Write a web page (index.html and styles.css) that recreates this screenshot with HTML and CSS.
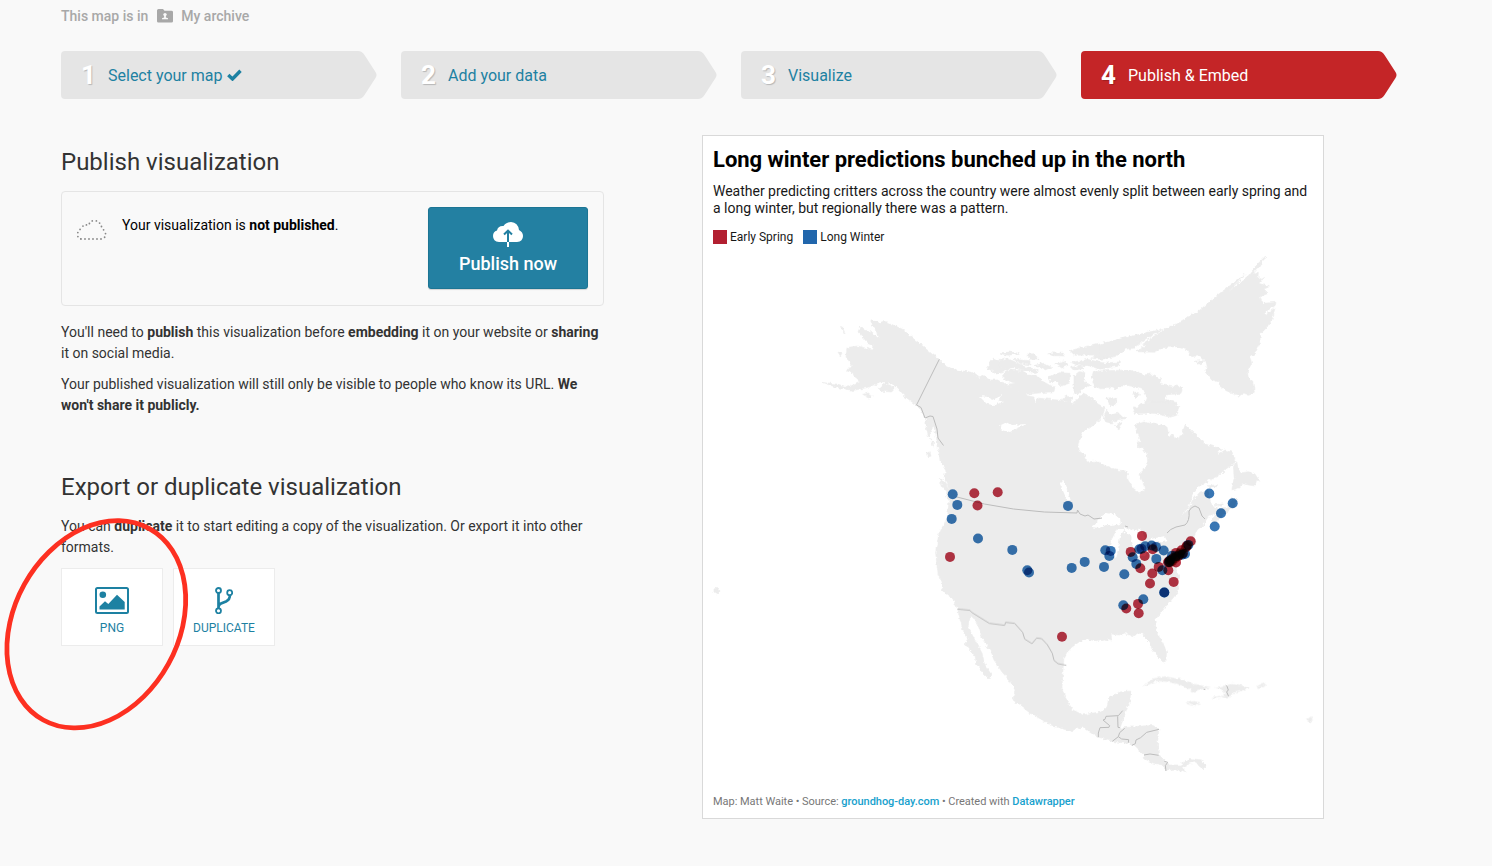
FILE: index.html
```
<!DOCTYPE html>
<html lang="en">
<head>
<meta charset="utf-8">
<title>Publish &amp; Embed</title>
<link rel="stylesheet" href="styles.css">
</head>
<body>
<svg class="defs" width="0" height="0"><defs>
  <path id="arrow" d="M4 0H297Q301 0 303.500 4L314.500 21Q316.500 24 314.500 27L303.500 44Q301 48 297 48H4Q0 48 0 44V4Q0 0 4 0Z"/>
</defs></svg>
<div class="page">
  <div class="crumb"><span>This map is in</span>
    <svg width="16" height="14" viewBox="0 0 16 14"><path fill="#a8a8a8" d="M1.500 0H6L7.500 1.800H14.500Q16 1.800 16 3.200V12.300Q16 13.600 14.600 13.600H1.400Q0 13.600 0 12.300V1.500Q0 0 1.500 0Z"/><circle cx="8" cy="5.600" r="1.700" fill="#f9f9f9"/><path fill="#f9f9f9" d="M7.100 6H8.900V8.500L11 9.300V10.300H5V9.300L7.100 8.500Z"/></svg>
    <span>My archive</span></div>
  <nav class="steps">
    <a class="step"><svg class="step-bg" viewBox="0 0 316 48"><use href="#arrow"/></svg><b>1</b><span>Select your map</span><svg class="check" width="15" height="12" viewBox="0 0 15 12"><path d="M1.300 6L5.500 10L13.500 1.800" fill="none" stroke="#1d81a2" stroke-width="3.400"/></svg></a>
    <a class="step"><svg class="step-bg" viewBox="0 0 316 48"><use href="#arrow"/></svg><b>2</b><span>Add your data</span></a>
    <a class="step"><svg class="step-bg" viewBox="0 0 316 48"><use href="#arrow"/></svg><b>3</b><span>Visualize</span></a>
    <a class="step active"><svg class="step-bg" viewBox="0 0 316 48"><use href="#arrow"/></svg><b>4</b><span>Publish &amp; Embed</span></a>
  </nav>
  <main class="columns">
    <section class="left">
      <h2>Publish visualization</h2>
      <div class="publish-box">
        <svg class="cloud" width="32" height="22" viewBox="0 0 32 22"><path d="M5 20H26Q30.500 18 29.500 14.500Q28.500 11 26 9.500Q24.500 2 18 1.500Q14 2 12.500 6.500Q8 4.500 5.500 9Q1 13 1.500 16Q2 19.500 5 20Z" fill="none" stroke="#888" stroke-width="1.800" stroke-linecap="round" stroke-dasharray="0 4"/></svg>
        <p>Your visualization is <b>not published</b>.</p>
        <button class="publish"><svg width="30" height="26" viewBox="0 0 30 26"><path fill="#fff" d="M6 20Q0 19.500 0 14Q0 9.500 4 8.500Q5 3.500 10.500 4Q13.500 0 18 0Q25 .5 26 8Q30 10 30 14Q30 19.500 24 20Z"/><path d="M15 9V20M11 12.500L15 8.700L19 12.500" fill="none" stroke="#2380a2" stroke-width="2"/><path d="M15 20V25" stroke="#fff" stroke-width="2"/></svg><span>Publish now</span></button>
      </div>
      <p class="copy">You'll need to <b>publish</b> this visualization before <b>embedding</b> it on your website or <b>sharing</b><br>it on social media.</p>
      <p class="copy">Your published visualization will still only be visible to people who know its URL. <b>We<br>won't share it publicly.</b></p>
      <h2 class="export">Export or duplicate visualization</h2>
      <p class="copy">You can <b>duplicate</b> it to start editing a copy of the visualization. Or export it into other<br>formats.</p>
      <div class="tiles">
        <a class="tile"><svg width="34" height="27" viewBox="0 0 34 27"><rect x="1" y="1" width="32" height="25" rx="1.500" fill="none" stroke="#1d81a2" stroke-width="2"/><circle cx="7.800" cy="7.800" r="3.300" fill="#1d81a2"/><path fill="#1d81a2" d="M4.500 22.500V19.500L10 14.300L13.300 17L22 7.800L29.700 15V22.500Z"/></svg><span>PNG</span></a>
        <a class="tile"><svg width="18" height="27" viewBox="0 0 18 27"><g fill="none" stroke="#1d81a2"><path stroke-width="2.700" d="M3.500 5V22M14.900 8Q15 12.500 11 14.500L6 16.500Q3.700 17.500 3.500 20"/><g stroke-width="1.800"><circle cx="3.500" cy="3.500" r="2.500" fill="#fff"/><circle cx="14.700" cy="5.700" r="2.500" fill="#fff"/><circle cx="3.500" cy="23.800" r="2.500" fill="#fff"/></g></g></svg><span>DUPLICATE</span></a>
      </div>
    </section>
    <section class="card">
      <h1>Long winter predictions bunched up in the north</h1>
      <p class="intro">Weather predicting critters across the country were almost evenly split between early spring and<br>a long winter, but regionally there was a pattern.</p>
      <div class="legend"><i class="red"></i><span>Early Spring</span><i class="blue"></i><span>Long Winter</span></div>
      <svg class="map" viewBox="703 250 620 540">
        <defs><filter id="coast" filterUnits="userSpaceOnUse" x="703" y="250" width="620" height="540" color-interpolation-filters="sRGB"><feTurbulence type="fractalNoise" baseFrequency=".28" numOctaves="2" seed="4"/><feDisplacementMap in="SourceGraphic" scale="4.500" xChannelSelector="R" yChannelSelector="G"/></filter></defs>
        <g filter="url(#coast)">
        <g class="land">
          <path d="M871 318.700L874 320 878 323 883 321.500 887 322 893 325 900 328 904 330 910 336 918 342 925 348 932 354 939 359 946 366 953 369 961 371 968 371.500 976 374 979 378 983 376 990 380 998 380 1004 384 1016 390 1028 396 1034 397 1035 403 1038 398 1046 399 1058 400 1065 402 1070 400 1073 404 1078 398 1083 394 1092 398 1098 404 1105 408 1103 414 1100 420 1094 424 1090 427 1083 432 1079 440 1078 446 1080 451.700 1085 455 1087 462 1096 461 1106 466 1116 470 1127 471 1128 480 1133 488 1139 492.700 1144.700 490 1143 482 1139 474 1145 469 1147.500 461 1147 454 1143 448 1137 446 1140 438 1136 430 1135.500 424 1146 421.500 1158 424 1167 427 1169 436 1173 435 1175 439 1180 438 1183 432 1185 424 1194 433 1200 438 1205 444 1212 446 1221.500 449 1216 456 1225 450 1232 452 1235 459 1233 464 1226 469 1219 476 1210 480 1198 487 1192 496 1188 508 1180 517 1188 510 1193 500 1200 492 1208 490 1210 500 1214 508 1218 507 1219 511 1208 517 1203 525 1197 530 1194 537 1196 543 1189 549 1181 555 1177 563 1175 569 1179 576 1177 582 1179.500 590 1173 598 1163 610 1156 619 1155 622 1157 632 1163 643 1166.500 652 1166 661 1163 662 1157 656 1152 649 1150 642 1142 634 1138 633 1133 637 1125 633 1119 635 1111 634 1112 641 1105 639 1095 641 1088 639 1079 642 1068 650 1064 658 1063 670 1062 687 1065 698 1073 710 1083 715 1092 713 1102 712 1107 707 1109 697 1120 692 1130.700 691 1130 700 1127 708 1124 717 1120 728 1132 727 1143 726 1153 725.500 1159 729 1157.500 743 1158.500 754 1166 762 1170 765 1180 765 1190 758.500 1202 760 1206 766 1203 769 1199 766 1196 762 1190 763 1183 767 1185 772.500 1176 769 1167 770 1162 765 1153 763 1145 759 1144 755 1133 745 1128 743.500 1113 741.500 1098 737 1083 727 1070 731 1053 726 1030 713 1013 700 1015 690 1010 681 1002 672 994 660 990 650 983 640 979 628 975 619 970 616.700 968 627 975 640 982 653 985 665 991 674 989 679 982 672 977 665 975 656 965 644 968 641 963 630 957.500 609 953 599 943 591.500 941 582 938 574 935.500 552 938.500 535 944 524 947.500 517 949 500 946 494 950 490 944 478 946 471 940 461 939 452 937 440 934 427 925 418 920 408 912 402 903 395 897 388 891 383 880 383 870 387 853 390.500 837 387.500 822 382.500 837 384 848 387 860 381 854 376 853 373 847 371 852 365 846 357 847 347.500 858 346 872 350 873 345 867 342 858 332 860 327 871 332 878 338 876 329 871 323Z"/>
          <g transform="translate(810 300) scale(.3333)">
            <path d="M205 265L230 250 255 265 245 276 215 274ZM158 283L175 279 187 288 178 294ZM90 78L98 82 105 101ZM82 153L96 160 91 168ZM348 356L368 370 366 392 355 410 348 380ZM362 415L370 425 371 447ZM350 460L360 454 364 468 356 474ZM388 535L405 548 430 585 412 580 398 562ZM530 203L550 178 600 188 610 202 560 222ZM572 161L600 156 628 160 600 166ZM610 178L660 182 660 195 630 190Z"/>
          </g>
          <g transform="translate(1000 320) scale(.3333)">
            <path d="M5 170L22 150 68 152 80 165 118 168 125 182 148 195 165 202 162 215 105 220 65 225 40 208 12 195 45 190 20 180ZM0 122L20 115 45 125 75 140 115 150 108 158 70 152 30 140 0 145ZM0 98L25 97 50 100 20 105ZM75 103L100 101 118 117 92 118ZM105 136L130 130 155 142 135 150ZM142 98L190 100 195 108 160 107ZM165 130L195 122 205 135 185 144ZM145 170L180 158 210 160 208 190 183 198 170 185 150 188ZM210 92L255 80 300 72 400 48 490 28 440 55 400 85 372 88 350 108 305 118 272 115 290 105 225 106ZM215 128L262 118 315 130 360 125 355 138 300 148 270 138 230 135ZM212 142L245 137 250 146 220 150ZM222 170L240 155 255 158 250 180 260 190 275 195 250 205 235 222 222 218ZM275 175L280 155 310 152 390 150 430 165 450 162 485 178 478 190 515 197 548 200 543 220 500 225 495 238 530 248 525 262 480 265 535 285 510 292 465 280 435 266 415 280 400 275 405 262 430 258 442 235 432 210 405 200 370 195 350 207 325 202 305 207 285 200ZM398 222L412 214 418 226 407 233ZM320 235L350 232 350 255 330 260ZM310 290L320 270 332 285 352 280 380 295 340 303 335 312 318 308ZM345 318L365 310 357 327ZM180 240L200 228 220 235 210 245Z"/>
          </g>
          <g transform="translate(1100 245) scale(.3333)">
            <path d="M497 33L480 63 458 88 475 82 474 103 492 98 480 115 508 125 492 132 505 145 480 155 487 175 528 172 525 182 490 204 500 208 525 188 520 215 500 248 482 266 478 300 465 325 450 335 455 355 442 380 445 398 458 408 463 442 445 448 430 445 418 453 400 445 380 438 360 424 355 410 335 405 315 380 322 365 318 350 300 332 275 335 262 315 230 305 190 308 160 322 110 320 140 300 125 298 180 262 235 233 300 195 350 152 435 88 385 142 447 90 470 60ZM285 348L312 347 300 360ZM100 445L112 440 118 448 108 457ZM0 298L110 270 178 254 150 272 90 300 60 325 0 338Z"/>
          </g>
          <g transform="translate(1080 400) scale(.3333)">
            <path d="M455 270L463 235 460 200 470 182 474 205 488 218 505 215 525 222 540 245 530 240 525 258 505 255 490 250 475 265ZM162 40L180 15 210 5 270 5 297 20 290 42 240 40ZM395 360L410 340 425 325 445 320 455 295 472 302 462 320 430 345 402 370ZM382 257L413 254 410 260 390 261ZM402 314L430 312 425 319Z"/>
          </g>
          <g transform="translate(1010 620) scale(.3333)">
            <path d="M402 200L425 177 465 170 520 180 550 192 600 202 570 208 545 217 540 208 515 195 475 185 440 182ZM530 250L550 244 570 248 552 257ZM604 232L640 228 645 215 618 202 650 197 670 190 700 198 717 203 690 213 670 218 658 231 640 230 615 235ZM740 198L768 190 762 197 745 203ZM893 298L903 290 908 300 898 306Z"/>
          </g>
          <path d="M714 589L718 587.500 720 591 717 594 714 592Z"/>
        </g>
        <g class="water">
          <path d="M979 396L989 397 992 400 1001 396 999 400 1003 402 994 405 987 404 984 401ZM999 426L1007 422 1012 425 1027 424 1018 428 1010 432 1002 430ZM1060 484L1064 480 1067 489 1071 501 1067 500ZM1091 527L1098 521 1102 516 1108 512 1114 514 1120 519 1121 524 1112 526 1106 525 1099 528ZM1109 553L1111 541 1117 529 1125 529 1120 536 1118 550 1116 559ZM1124 527L1134 531 1140 528 1145 537 1138 547 1133 547 1131 536 1125 532ZM1136 553L1154 545 1156 547 1142 556 1137 556ZM1151 539L1165 536 1167 540 1155 543Z"/>
        </g>
        </g>
        <g class="borders">
          <path d="M939.300 359.300L916.500 405 921 407.500 925 418 930 416 933 416.500 937 429 938 438 943.500 445.500M957 497Q1010 513 1077 513L1077.500 510 1080 514 1085 516 1088 515 1094 519 1102 518M1125 526L1128 527M1167 533Q1170 529 1176 527L1185 525Q1190 521 1189 511Q1191 507 1195 506L1199 508 1202 516 1205 519"/>
          <g transform="translate(920 470) scale(.3333)"><path d="M112 417L150 421 155 427 208 460 254 466 257 457 284 460 308 487 314 507 336 521 350 504 365 506 382 524 397 550 402 571 414 581 439 586"/></g>
          <g transform="translate(1010 620) scale(.3333)"><path d="M338 272L325 287 288 289 285 298 279 300 299 317 297 322 270 323 265 339 265 352M323 289L324 322 330 323M344 325L329 338 325 350 307 364M325 350L335 357 356 359 355 368M447 328L410 337 392 353 378 360 376 371 366 376M402 405L420 402 446 406M463 424L473 427 466 437 468 453M650 196L655 210 650 216 656 229M581 208H586"/></g>
        </g>
        <g id="dots" class="dots"></g>
      </svg>
      <p class="foot">Map: Matt Waite • Source: <a>groundhog-day.com</a> • Created with <a>Datawrapper</a></p>
    </section>
  </main>
</div>
<svg class="annotation" width="200" height="230" viewBox="0 510 200 230"><ellipse cx="96.300" cy="624.300" rx="109.400" ry="82.300" transform="rotate(-61 96.300 624.300)" fill="none" stroke="#fd3021" stroke-width="4.800"/></svg>
<script src="map.js"></script>
</body>
</html>
```
FILE: styles.css
```
* { box-sizing: border-box; }
body { margin: 0; height: 866px; overflow: hidden; background: #f9f9f9; font-family: Roboto, "Liberation Sans", sans-serif; color: #333; position: relative; }
p, h1, h2 { margin: 0; }
.defs { display: block; height: 0; }
.page { padding-left: 61px; }
.crumb { height: 51px; padding-top: 7px; display: flex; align-items: flex-start; font-size: 14px; line-height: 19px; font-weight: 500; color: #a8a8a8; }
.crumb svg { margin: 2px 8px 0 9px; }
.steps { display: flex; gap: 24px; }
.step { position: relative; isolation: isolate; width: 316px; height: 48px; padding-left: 20px; display: flex; align-items: center; font-size: 16px; color: #1d81a2; white-space: nowrap; }
.step-bg { position: absolute; inset: 0; z-index: -1; width: 316px; height: 48px; fill: #e5e5e5; }
.step b { width: 27px; font-size: 26px; color: #fff; text-shadow: 1px 1px 1px rgba(0,0,0,.2); }
.step .check { margin-left: 5px; }
.step.active { color: #fff; }
.active .step-bg { fill: #c42527; }
.columns { display: flex; gap: 98px; padding-top: 36px; }
.left { width: 543px; padding-top: 7px; }
h2 { font-size: 24px; line-height: 40px; font-weight: 400; }
.publish-box { margin-top: 9px; height: 115px; border: 1px solid #e5e5e5; border-radius: 4px; padding: 15px; display: flex; align-items: flex-start; margin-bottom: 16px; }
.cloud { margin: 12px 14px 0 -1px; }
.publish-box p { font-size: 14px; line-height: 20px; padding-top: 8px; color: #000; flex: 1; }
.publish { width: 160px; height: 82px; border: 1px solid #1c7594; border-radius: 3px; background: #2380a2; color: #fff; font: 500 18px/24px Roboto, sans-serif; display: flex; flex-direction: column; align-items: center; justify-content: flex-start; padding: 14px 0 0; gap: 4px; box-shadow: 0 1px 1px rgba(0,0,0,.15); }
.copy { font-size: 14px; line-height: 21px; margin-bottom: 10px; white-space: nowrap; }
.export { margin: 51px 0 9px; }
.tiles { display: flex; gap: 10px; }
.tile { width: 102px; height: 78px; background: #fff; border: 1px solid #ececec; display: flex; flex-direction: column; align-items: center; padding-top: 18px; gap: 6px; font-size: 12px; line-height: 16px; color: #1d81a2; }
.card { width: 622px; height: 684px; background: #fff; border: 1px solid #d9d9d9; padding: 10px 0 0; }
.card h1 { padding-left: 10px; font-size: 22px; line-height: 28px; letter-spacing: -.015px; color: #000; white-space: nowrap; }
.intro { padding: 9px 0 0 10px; font-size: 14px; line-height: 17px; letter-spacing: -.01px; color: #181818; white-space: nowrap; }
.legend { padding: 7px 0 0 10px; display: flex; align-items: center; height: 33px; font-size: 12px; color: #181818; }
.legend i { width: 14px; height: 14px; margin-right: 3px; }
.legend span { margin-right: 10px; }
.red { background: #b21f31; }
.blue { background: #2166ac; }
.map { display: block; width: 620px; height: 540px; }
.land { fill: #ececec; stroke: #ececec; }
.land path { stroke-width: .6px; vector-effect: non-scaling-stroke; }
.water { fill: #fff; }
.borders path { fill: none; stroke: #bcbcbc; stroke-width: 1; vector-effect: non-scaling-stroke; }
.dots circle { mix-blend-mode: multiply; opacity: .9; }
.foot { padding: 5px 0 0 10px; font-size: 11px; line-height: 14px; letter-spacing: -.027px; color: #777; white-space: nowrap; }
.foot a { color: #18a1cd; font-weight: 500; }
.annotation { position: absolute; left: 0; top: 510px; }
```
FILE: map.js
```
const longWinter = [
  [952.7,494],[957.3,504.7],[951.7,518.7],[978,538.3],[1012.3,549.7],[1027.3,570],[1029,572.3],[1068,505.7],
  [1071.7,567.7],[1084.7,561.7],[1104,566.7],[1105.3,550],[1110.7,550.7],[1109.3,555.7],
  [1209.3,493.3],[1232.7,503],[1221,513],[1214.7,526.3],[1124.3,574],[1132.7,557],[1136.3,563.7],
  [1139.3,549],[1141.5,548.5],[1145.2,546],[1151.7,545.3],[1156,546.7],[1163.7,550.3],[1156.3,558.7],[1162.3,570],
  [1164.3,592.3],[1164.3,592.3],[1143.3,599],[1123.3,605],[1188.3,544.7],[1185,553.7],[1182,554.5],[1172,555.5],[1176,556],[1170,560],[1169,562]
];
const earlySpring = [
  [974.3,493],[997.7,492],[977.5,505.3],[950,556.7],[1062,636.5],[1142,535.7],[1130.7,551.7],[1144.7,555.7],[1152.7,549],
  [1140.3,568],[1158.7,566.7],[1152.3,573.3],[1150,583.3],[1168.3,570],[1173.7,581.7],[1138,603.7],[1126.3,608.3],[1138.7,613],
  [1190.7,541],[1187,545.5],[1186,547],[1176,552.7],[1176,562.3],[1181.5,550],[1180,553],[1179,555],[1183,553],[1173,558],[1171,560],[1169,561],[1168,562],[1175,558],[1178,556],[1172,561],[1170,562]
];
const layer = document.getElementById("dots");
function plot(points, color) {
  for (const [x, y] of points) {
    const c = document.createElementNS("http://www.w3.org/2000/svg", "circle");
    c.setAttribute("cx", x);
    c.setAttribute("cy", y + 0.2);
    c.setAttribute("r", 5);
    c.setAttribute("fill", color);
    layer.appendChild(c);
  }
}
plot(earlySpring, "#b21f31");
plot(longWinter, "#2166ac");
```
